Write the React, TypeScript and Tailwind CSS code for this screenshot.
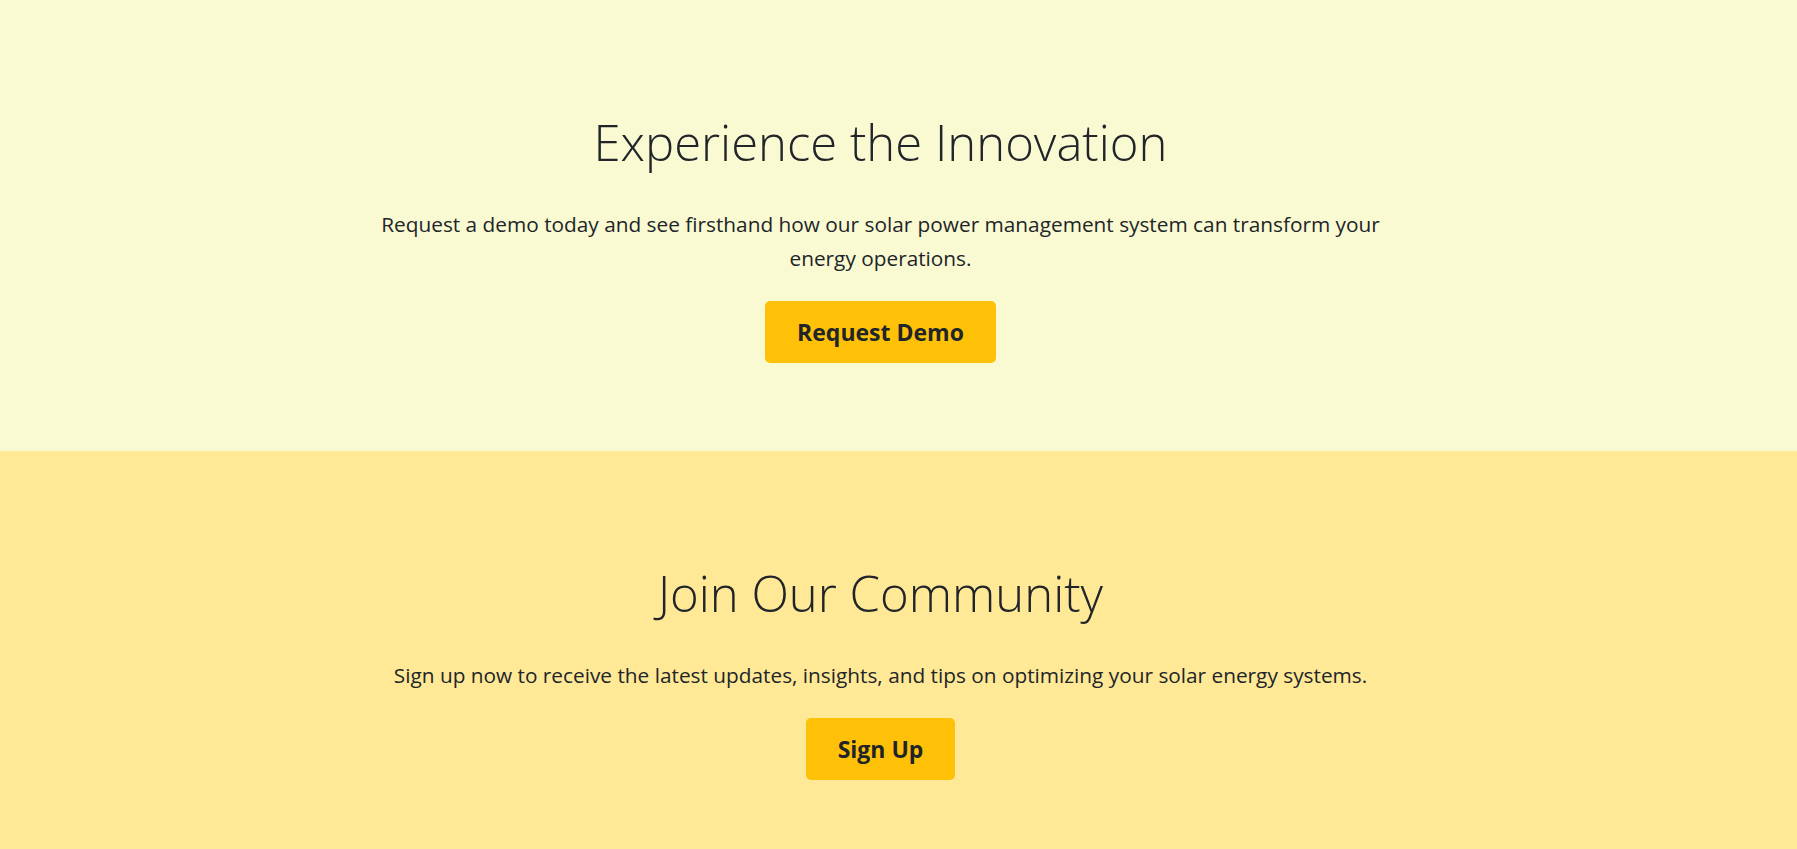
import React from 'react';

const font = { fontFamily: '"Open Sans", "Noto Sans", sans-serif' };

interface CtaProps {
  title: string;
  text: string;
  button: string;
  bg: string;
}

const CtaSection: React.FC<CtaProps> = ({ title, text, button, bg }) => {
  return (
    <section className={`${bg} pt-[111px] pb-[88px] pr-[36px] text-center text-[#212529]`}>
      <div className="mx-auto max-w-[1060px] px-3 flex flex-col items-center">
        <h2 className="text-[49px] font-light leading-[62px] mb-[34px]">{title}</h2>
        <p className="text-[20.8px] leading-[34px] font-normal">{text}</p>
        <button className="mt-[26px] h-[62px] px-8 rounded-[5px] bg-[#ffc107] text-[23px] font-bold text-[#212529]">
          {button}
        </button>
      </div>
    </section>
  );
};

export default function App() {
  return (
    <div style={font} className="min-h-screen">
      <CtaSection
        bg="bg-[#fafad2]"
        title="Experience the Innovation"
        text="Request a demo today and see firsthand how our solar power management system can transform your energy operations."
        button="Request Demo"
      />
      <CtaSection
        bg="bg-[#ffe996]"
        title="Join Our Community"
        text="Sign up now to receive the latest updates, insights, and tips on optimizing your solar energy systems."
        button="Sign Up"
      />
    </div>
  );
}
